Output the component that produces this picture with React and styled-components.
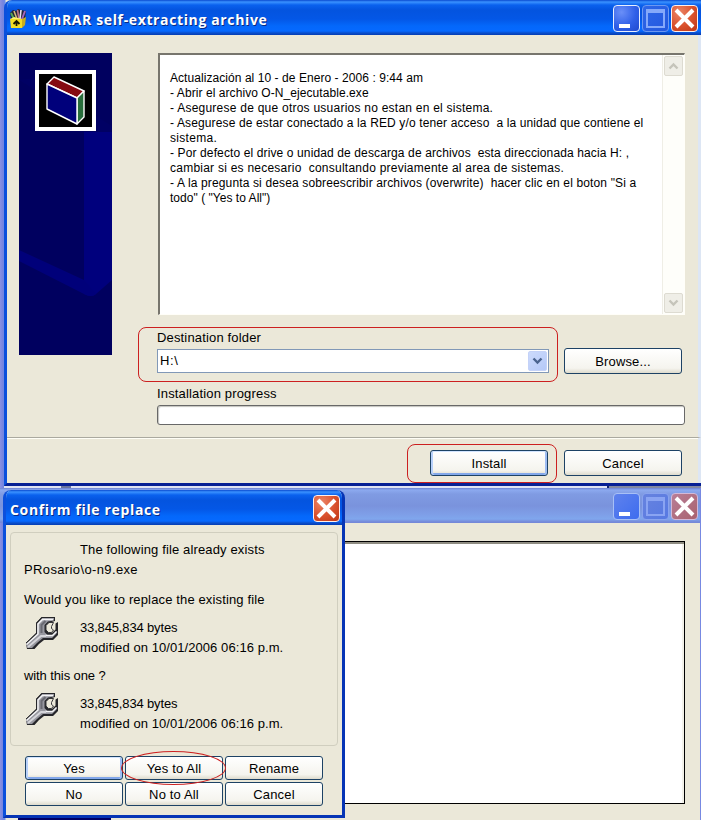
import React from 'react';
import styled, { createGlobalStyle, css } from 'styled-components';

const Global = createGlobalStyle`
  * { box-sizing: border-box; }
  body { margin: 0; background: #ebe8d9; overflow: hidden; }
  button { font: inherit; color: inherit; }
`;

const Desktop = styled.div`
  position: relative;
  width: 701px;
  height: 820px;
  overflow: hidden;
  padding-left: 4px;
  background: linear-gradient(90deg, #8a91e2 0, #7584df 3px, #6c8ce8 5px, #ebe8d9 6px);
  font: 13px/15px "Liberation Sans", Arial, sans-serif;
  color: #000;
`;

const MainWindow = styled.section`
  display: flex;
  flex-direction: column;
  height: 486px;
  border-left: 3px solid #0b50dc;
  border-bottom: 3px solid #061f94;
  border-radius: 8px 0 0 0;
  background: #ebe8d9;
  overflow: hidden;
`;

const activeBar = css`
  background: linear-gradient(180deg, #0a4ad0 0, #3a92ff 2px, #0a61ee 5px, #0454df 10px, #0457e6 19px, #0468fb 26px, #0669ff 31px, #0a4ecb 33px, #043cb4 35px);
`;
const inactiveBar = css`
  background: linear-gradient(180deg, #6c80d2 0, #8ca9ef 2px, #809be3 6px, #7a93dd 18px, #7e9ee7 26px, #80a6ed 31px, #7488d8 34px);
`;

const TitleBar = styled.header`
  display: flex;
  flex: none;
  align-items: center;
  height: 35px;
  margin-left: ${p => (p.$bleed ? '-3px' : 0)};
  padding: ${p => p.$pad};
  ${p => (p.$inactive ? inactiveBar : activeBar)}
`;

const Title = styled.h1`
  flex: 1;
  margin: 0 0 0 ${p => p.$gap};
  padding-top: 2px;
  font: bold 14px/20px "Open Sans", "Noto Sans", sans-serif;
  letter-spacing: ${p => p.$track};
  white-space: nowrap;
  color: #fff;
  text-shadow: 1px 1px 0 #0a2a82;
`;

const Controls = styled.div`
  display: flex;
  gap: 2px;
`;

const faces = {
  blue: ['radial-gradient(circle at 30% 25%, #6a8ff8, #3060e8 55%, #2049cf)', '#e8efff'],
  blueOff: ['linear-gradient(135deg, #2e67e8, #2358df)', '#6c98f1'],
  red: ['radial-gradient(circle at 30% 25%, #eb8567, #d9502c 55%, #bd3716)', '#fff0ec'],
  paleBlue: ['linear-gradient(135deg, #5f82ed, #3d6cef)', '#a8c0f6'],
  paleOff: ['linear-gradient(135deg, #6783df, #5779e2)', '#89a3ee'],
  paleRed: ['linear-gradient(135deg, #b87e97, #a9626e)', '#d2b9d8'],
};

const Control = styled.button`
  display: block;
  width: 27px;
  height: 27px;
  padding: 0;
  border: 1px solid ${p => faces[p.$face][1]};
  border-radius: 4px;
  background: ${p => faces[p.$face][0]};
  svg { display: block; }
`;

const Minimize = ({ face }) => (
  <Control $face={face} aria-label="Minimize">
    <svg width="25" height="25"><rect x="5" y="18" width="11" height="4" fill="#fff" /></svg>
  </Control>
);
const Maximize = ({ face, stroke }) => (
  <Control $face={face} aria-label="Maximize">
    <svg width="25" height="25" fill="none" stroke={stroke}>
      <rect x="4" y="4" width="17" height="17" strokeWidth="2" />
      <path d="M3 5.5h19" strokeWidth="3" />
    </svg>
  </Control>
);
const Close = ({ face }) => (
  <Control $face={face} aria-label="Close">
    <svg width="25" height="25"><path d="M4 4l17 17M21 4L4 21" stroke="#fff" strokeWidth="4" /></svg>
  </Control>
);

const ArchiveIcon = () => (
  <svg width="18" height="20" viewBox="0 0 18 20">
    <path d="M1 4l3-3 3 1 2-2 3 1 5 1-1 8H2z" fill="#252536" />
    <path d="M2 4l3 6" stroke="#55a65b" strokeWidth="2" />
    <path d="M5 2l3 8" stroke="#d5bd79" strokeWidth="1.6" />
    <path d="M8.5 1l1.5 9" stroke="#c07688" strokeWidth="1.6" />
    <path d="M12 1l-1 9" stroke="#e9e4ef" strokeWidth="1.6" />
    <path d="M16 2l-3 8" stroke="#a468c0" strokeWidth="2" />
    <path d="M1 10h12v9H2z" fill="#f2dc25" />
    <path d="M13 10l4-2-1 8-3 3z" fill="#c8ad1e" />
    <path d="M1 10l4-2 8 2" fill="#fff26c" />
    <path d="M7.5 17v-5M4.5 15l3-3 3 3" fill="none" stroke="#161600" strokeWidth="1.8" />
  </svg>
);

const Body = styled.div`
  display: grid;
  grid-template-columns: 93px 528px;
  justify-content: start;
  column-gap: 45px;
  height: 402px;
  padding: 18px 0 0 12px;
  border-right: 3px solid #dde6f4;
`;

const Banner = styled.aside`
  display: grid;
  height: 302px;
  svg { display: block; }
`;

const BannerArt = () => (
  <svg width="93" height="302" viewBox="0 0 93 302">
    <rect width="93" height="302" fill="#00005f" />
    <path d="M0 27l65 40v160l28-11V73L16 25z" fill="#000070" opacity=".3" />
    <path d="M65 79h28v148l-16 14q-5 4-12 0z" fill="#00007d" />
    <path d="M0 197l65 30 12 14q-4 4-12 0L0 208z" fill="#00007a" />
    <rect x="18" y="19" width="57" height="57" fill="#000" stroke="#fff" strokeWidth="4" />
    <g stroke="#fff" strokeWidth="1.4" strokeLinejoin="round">
      <path d="M28 31l7-7 30 14-7 7z" fill="#850b12" />
      <path d="M58 45l7-7v26l-7 7z" fill="#286e3b" />
      <path d="M28 31l30 14v26L28 56z" fill="#00007b" />
    </g>
  </svg>
);

const Form = styled.div`
  display: flex;
  flex-direction: column;
`;

const Readme = styled.div`
  display: flex;
  justify-content: space-between;
  width: 527px;
  height: 262px;
  margin-left: 1px;
  border: 1px solid #fff;
  border-width: 2px 1px 1px 2px;
  border-color: #77756d #fffef8 #fffef8 #77756d;
  background: #fff;
`;

const ReadmeText = styled.div`
  padding: 16px 0 0 10px;
  font-size: 12px;
  white-space: pre;
`;

const Line = styled.p`
  margin: 0;
  height: 15px;
  letter-spacing: ${p => p.$track || '0'};
`;

const Scrollbar = styled.div`
  display: flex;
  flex: none;
  flex-direction: column;
  justify-content: space-between;
  width: 22px;
  padding: 1px;
  border-left: 1px solid #efeee6;
  background: #fefefa;
`;

const ScrollButton = styled.button`
  display: flex;
  align-items: center;
  justify-content: center;
  width: 19px;
  height: 20px;
  padding: 0;
  border: 1px solid #dddbd1;
  border-radius: 2px;
  background: #efeee7;
`;

const Chevron = ({ up, color }) => (
  <svg width="11" height="8" fill="none" stroke={color} strokeWidth="2.4">
    <path d={up ? 'M1.5 6.5l4-4 4 4' : 'M1.5 1.5l4 4 4-4'} />
  </svg>
);

const Label = styled.label`
  display: block;
  height: 15px;
  margin-top: ${p => p.$top};
  letter-spacing: .16px;
  white-space: nowrap;
`;

const FolderRow = styled.div`
  display: flex;
  gap: 15px;
  margin-top: 3px;
`;

const Combo = styled.div`
  display: flex;
  justify-content: space-between;
  width: 392px;
  height: 24px;
  margin-top: 1px;
  padding: 1px 1px 1px 2px;
  border: 1px solid #8198b7;
  background: #fff;
  line-height: 20px;
  letter-spacing: .6px;
`;

const ComboButton = styled.button`
  display: flex;
  align-items: center;
  justify-content: center;
  width: 19px;
  height: 20px;
  padding: 0;
  border: 1px solid #c4d2f8;
  border-radius: 2px;
  background: linear-gradient(135deg, #ccdafc, #b5c9f7);
`;

const Button = styled.button`
  width: ${p => (p.$small ? 98 : 118)}px;
  height: ${p => (p.$small ? 24 : 26)}px;
  padding: 1px 0 0;
  border: 1px solid #1d4265;
  border-radius: 3px;
  background: linear-gradient(#fff, #f5f4ee 80%, #dedbcd);
  box-shadow: ${p => (p.$primary ? 'inset 0 1px 0 #d2e4ff, inset 2px 0 0 #b7d0fa, inset -2px 0 0 #9ebdf3, inset 0 -2px 0 #82a7ea' : 'none')};
  letter-spacing: .15px;
  line-height: ${p => (p.$small ? 21 : 23)}px;
`;

const Progress = styled.div`
  height: 20px;
  margin-top: 4px;
  border: 1px solid #686868;
  border-radius: 3px;
  background: #fff;
  box-shadow: inset 1px 1px 1px #c4c4be;
`;

const Footer = styled.footer`
  display: flex;
  flex: 1;
  justify-content: flex-end;
  gap: 16px;
  padding: 12px 16px 0 0;
  border-top: 1px solid #aaa99f;
  border-right: 3px solid #dde6f4;
  box-shadow: inset 0 1px #fffef6;
`;

const BackWindow = styled.section`
  margin-left: -4px;
  border-right: 1px solid #7789e2;
`;

const Seam = styled.div`
  display: flex;
  justify-content: space-between;
  height: 2px;
  margin: 0 -1px 0 4px;
  background: #dfe3f3;
  &::before { content: ''; width: 10px; margin-left: 57px; background: #69749f; }
  &::after { content: ''; width: 92px; border-left: 2px solid #10246f; background: #8087a1; }
`;

const BackBody = styled.div`
  padding: 18px 15px 0 340px;
`;

const BackPane = styled.div`
  height: 263px;
  border: 1px solid #000;
  background: #fff;
  box-shadow: inset 0 2px #8f8d82, inset -2px 0 #f3f2ea;
`;

const BackFoot = styled.div`
  width: 93px;
  height: 16px;
  margin: 14px 0 0 18px;
  background: #000065;
`;

const Dialog = styled.section`
  position: absolute;
  left: 3px;
  top: 490px;
  width: 342px;
  height: 328px;
  border: solid #0b50dc;
  border-width: 0 3px 3px;
  border-color: #0b50dc #0634b5 #0634b5 #0b50dc;
  border-radius: 8px 8px 0 0;
  background: #ebe8d9;
  overflow: hidden;
`;

const Group = styled.div`
  height: 214px;
  margin: 7px 4px 0;
  padding: 7px 0 0 13px;
  border: 1px solid #d0cebf;
  border-radius: 4px;
  line-height: 20px;
`;

const Text = styled.p`
  height: 20px;
  margin: ${p => p.$top || 0} 0 0 ${p => p.$left || 0};
  letter-spacing: ${p => p.$track || '.14px'};
  white-space: nowrap;
`;

const FileInfo = styled.div`
  display: grid;
  grid-template-columns: 56px 1fr;
  height: 40px;
  margin-top: 8px;
  svg { display: block; margin-top: -2px; }
`;

const Wrench = () => (
  <svg width="36" height="36" viewBox="0 0 36 36">
    <path d="M2 27.500L12 17.500V7l5.500-6H31v4l-5 1.500-2 3v5l2 2h2.500l3-3V7.500L34 6v13l-5 5h-9l-5 4-4.500 5H3z" fill="#26262a" />
    <path d="M2 28L13 18V7.500L18 2h12v2.500l-6 1-3.500 3.500v7l3 3h5l4-4V8v9.500L28 22h-9l-6 5-5 5H3z" fill="#97979f" />
    <path d="M2.500 28.500L14 18V8l4.500-4.500H29M21 19.500h7.500l4-4" fill="none" stroke="#f4f4f6" strokeWidth="1.500" />
    <path d="M4 31L17 20h5" fill="none" stroke="#d4d4d9" strokeWidth="2" />
    <path d="M17.500 17V9l4-4" fill="none" stroke="#6a6a72" strokeWidth="2" />
    <path d="M22 9.500L25 6.500h4.500l-2 4v2l2 1.500-2 2.500h-3L22 14z" fill="#ebe8d9" stroke="#36363a" strokeWidth="1" />
    <path d="M2 27L12.500 17V7L18 1.500h12.500" fill="none" stroke="#26262a" />
  </svg>
);

const ButtonGrid = styled.div`
  display: grid;
  grid-template-columns: repeat(3, 98px);
  gap: 2px;
  margin: 10px 0 0 19px;
`;

const Highlight = styled.div`
  position: absolute;
  left: ${p => p.$x}px;
  top: ${p => p.$y}px;
  width: ${p => p.$w}px;
  height: ${p => p.$h}px;
  border: 1px solid #cc2020;
  border-radius: ${p => p.$radius};
  pointer-events: none;
`;

const readme = [
  ['Actualización al 10 - de Enero - 2006 : 9:44 am', '.06px'],
  ['- Abrir el archivo O-N_ejecutable.exe', '.07px'],
  ['- Asegurese de que otros usuarios no estan en el sistema.', '.24px'],
  ['- Asegurese de estar conectado a la RED y/o tener acceso  a la unidad que contiene el', '.13px'],
  ['sistema.', '.3px'],
  ['- Por defecto el drive o unidad de descarga de archivos  esta direccionada hacia H: ,', '.12px'],
  ['cambiar si es necesario  consultando previamente al area de sistemas.', '.24px'],
  ['- A la pregunta si desea sobreescribir archivos (overwrite)  hacer clic en el boton "Si a', '.14px'],
  ['todo" ( "Yes to All")', '.03px'],
];

const FileDetails = () => (
  <FileInfo>
    <Wrench />
    <div>
      <Text $track="-.15px">33,845,834 bytes</Text>
      <Text $track=".07px">modified on 10/01/2006 06:16 p.m.</Text>
    </div>
  </FileInfo>
);

export default function App() {
  return (
    <>
      <Global />
      <Desktop>
        <MainWindow>
          <TitleBar $bleed $pad="2px 3px 0 5px">
            <ArchiveIcon />
            <Title $gap="6px" $track=".63px">WinRAR self-extracting archive</Title>
            <Controls>
              <Minimize face="blue" />
              <Maximize face="blueOff" stroke="#85a9fa" />
              <Close face="red" />
            </Controls>
          </TitleBar>
          <Body>
            <Banner><BannerArt /></Banner>
            <Form>
              <Readme>
                <ReadmeText>
                  {readme.map(([text, track]) => <Line key={text} $track={track}>{text}</Line>)}
                </ReadmeText>
                <Scrollbar>
                  <ScrollButton aria-label="Scroll up"><Chevron up color="#c5c4ba" /></ScrollButton>
                  <ScrollButton aria-label="Scroll down"><Chevron color="#c5c4ba" /></ScrollButton>
                </Scrollbar>
              </Readme>
              <Label $top="15px">Destination folder</Label>
              <FolderRow>
                <Combo>
                  <span>H:\</span>
                  <ComboButton aria-label="Open list"><Chevron color="#4a638e" /></ComboButton>
                </Combo>
                <Button>Browse...</Button>
              </FolderRow>
              <Label $top="12px">Installation progress</Label>
              <Progress />
            </Form>
          </Body>
          <Footer>
            <Button $primary>Install</Button>
            <Button>Cancel</Button>
          </Footer>
        </MainWindow>

        <BackWindow>
          <Seam />
          <TitleBar $inactive $pad="2px 2px 0 0">
            <Title $gap="0" $track="0" />
            <Controls>
              <Minimize face="paleBlue" />
              <Maximize face="paleOff" stroke="#8aa4f2" />
              <Close face="paleRed" />
            </Controls>
          </TitleBar>
          <BackBody><BackPane /></BackBody>
          <BackFoot />
        </BackWindow>

        <Dialog>
          <TitleBar $pad="2px 2px 0 0">
            <Title $gap="4px" $track=".65px">Confirm file replace</Title>
            <Close face="red" />
          </TitleBar>
          <Group>
            <Text $left="56px">The following file already exists</Text>
            <Text $track=".37px">PRosario\o-n9.exe</Text>
            <Text $top="10px">Would you like to replace the existing file</Text>
            <FileDetails />
            <Text $top="8px" $track="-.1px">with this one ?</Text>
            <FileDetails />
          </Group>
          <ButtonGrid>
            <Button $small $primary>Yes</Button>
            <Button $small>Yes to All</Button>
            <Button $small>Rename</Button>
            <Button $small>No</Button>
            <Button $small>No to All</Button>
            <Button $small>Cancel</Button>
          </ButtonGrid>
        </Dialog>

        <Highlight $x={138} $y={327} $w={420} $h={55} $radius="8px" />
        <Highlight $x={407} $y={444} $w={150} $h={39} $radius="8px" />
        <Highlight $x={121} $y={751} $w={105} $h={34} $radius="50%" />
      </Desktop>
    </>
  );
}
